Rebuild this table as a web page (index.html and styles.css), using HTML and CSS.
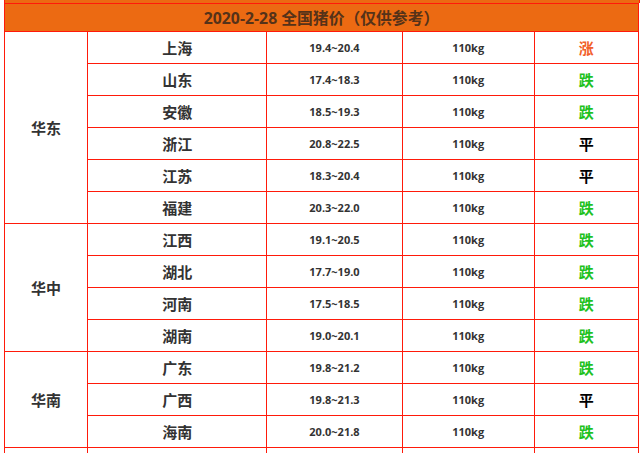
FILE: index.html
```html
<!DOCTYPE html>
<html lang="zh">
<head>
<meta charset="utf-8">
<title>全国猪价</title>
<link rel="stylesheet" href="styles.css">
</head>
<body>
<div class="sheet">
  <div class="strip"></div>
  <table class="prices">
    <colgroup>
      <col class="c-region"><col class="c-prov"><col class="c-price"><col class="c-weight"><col class="c-trend">
    </colgroup>
    <thead>
      <tr class="head"><th colspan="5">2020-2-28 全国猪价（仅供参考）</th></tr>
    </thead>
    <tbody>
      <tr><td class="region" rowspan="6">华东</td><td class="prov">上海</td><td class="num">19.4~20.4</td><td class="num">110kg</td><td class="trend up">涨</td></tr>
      <tr><td class="prov">山东</td><td class="num">17.4~18.3</td><td class="num">110kg</td><td class="trend down">跌</td></tr>
      <tr><td class="prov">安徽</td><td class="num">18.5~19.3</td><td class="num">110kg</td><td class="trend down">跌</td></tr>
      <tr><td class="prov">浙江</td><td class="num">20.8~22.5</td><td class="num">110kg</td><td class="trend flat">平</td></tr>
      <tr><td class="prov">江苏</td><td class="num">18.3~20.4</td><td class="num">110kg</td><td class="trend flat">平</td></tr>
      <tr><td class="prov">福建</td><td class="num">20.3~22.0</td><td class="num">110kg</td><td class="trend down">跌</td></tr>
      <tr><td class="region" rowspan="4">华中</td><td class="prov">江西</td><td class="num">19.1~20.5</td><td class="num">110kg</td><td class="trend down">跌</td></tr>
      <tr><td class="prov">湖北</td><td class="num">17.7~19.0</td><td class="num">110kg</td><td class="trend down">跌</td></tr>
      <tr><td class="prov">河南</td><td class="num">17.5~18.5</td><td class="num">110kg</td><td class="trend down">跌</td></tr>
      <tr><td class="prov">湖南</td><td class="num">19.0~20.1</td><td class="num">110kg</td><td class="trend down">跌</td></tr>
      <tr><td class="region" rowspan="3">华南</td><td class="prov">广东</td><td class="num">19.8~21.2</td><td class="num">110kg</td><td class="trend down">跌</td></tr>
      <tr><td class="prov">广西</td><td class="num">19.8~21.3</td><td class="num">110kg</td><td class="trend flat">平</td></tr>
      <tr><td class="prov">海南</td><td class="num">20.0~21.8</td><td class="num">110kg</td><td class="trend down">跌</td></tr>
      <tr class="next"><td></td><td></td><td></td><td></td><td></td></tr>
    </tbody>
  </table>
</div>
</body>
</html>
```

FILE: styles.css
```css
html, body {
  margin: 0;
  padding: 0;
  background: #ffffff;
}

body {
  font-family: "Open Sans", "Noto Sans CJK SC", sans-serif;
  color: #333333;
}

.sheet {
  padding-left: 4px;
  width: 636px;
}

.strip {
  height: 3px;
  background: #ec6a12;
  border-left: 1px solid #ff1a0a;
  border-right: 1px solid #ff1a0a;
}

.prices {
  border-collapse: collapse;
  table-layout: fixed;
  width: 635px;
}

.c-region { width: 83px; }
.c-prov { width: 179px; }
.c-price { width: 135px; }
.c-weight { width: 132px; }
.c-trend { width: 104px; }

.prices th,
.prices td {
  border: 1px solid #ff1a0a;
  padding: 0;
  text-align: center;
  vertical-align: middle;
}

.head th {
  height: 27px;
  background: #ec6a12;
  color: #553219;
  font-size: 15.8px;
  font-weight: 700;
  font-family: "Open Sans", "Noto Sans CJK SC", sans-serif;
}

.prices tbody td {
  height: 31px;
}

.region,
.prov {
  font-family: "Noto Sans CJK SC", sans-serif;
  font-size: 15px;
  font-weight: 700;
  color: #333333;
}

.num {
  font-family: "Open Sans", sans-serif;
  font-size: 11px;
  font-weight: 700;
  color: #333333;
}

.trend {
  font-family: "Noto Sans CJK SC", sans-serif;
  font-size: 15px;
  font-weight: 700;
}

.trend.up { color: #f2602a; }
.trend.down { color: #1fc21f; }
.trend.flat { color: #000000; }
```
